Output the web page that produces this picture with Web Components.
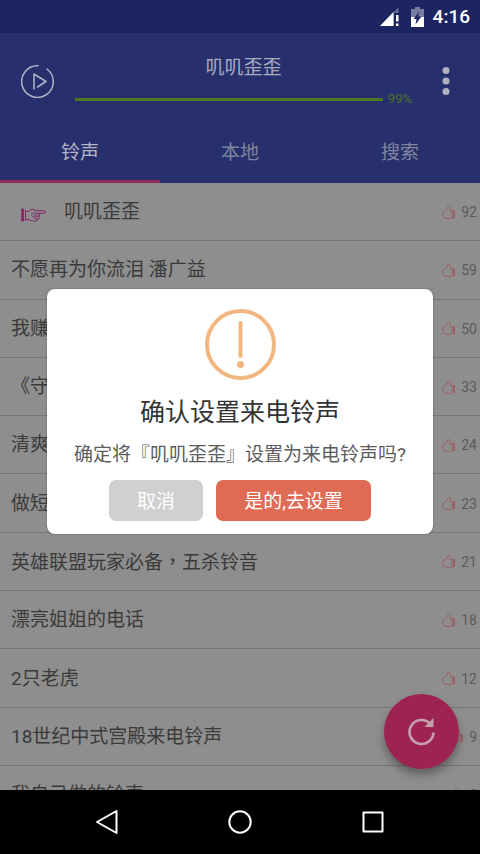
<!DOCTYPE html>
<html lang="zh-CN">
<head>
<meta charset="utf-8">
<meta name="viewport" content="width=device-width, initial-scale=1">
<title>铃声</title>
<style>
html, body { margin: 0; height: 100%; }
body { font-family: Roboto, "Noto Sans CJK SC", sans-serif; font-size: 19px; background: #000; overflow: hidden; }
</style>
</head>
<body>
<ring-app></ring-app>

<template id="t-app">
<style>
:host { display: flex; flex-direction: column; height: 100vh; }
main { flex: 1; min-height: 0; position: relative; display: flex; flex-direction: column; background: #8e8e8e; }
.layer { position: absolute; inset: 0; display: grid; align-items: center; padding: 0 47px; }
song-list { flex: 1; min-height: 0; }
refresh-fab { position: absolute; right: 21px; bottom: 21px; }
.tc { font-family: "Noto Sans CJK TC", sans-serif; }
</style>
<status-bar>4:16</status-bar>
<main>
  <player-header>叽叽歪歪</player-header>
  <tab-strip>
    <tab-item selected>铃声</tab-item>
    <tab-item>本地</tab-item>
    <tab-item>搜索</tab-item>
  </tab-strip>
  <song-list>
    <song-row playing count="92">叽叽歪歪</song-row>
    <song-row count="59">不愿再为你流泪 潘广益</song-row>
    <song-row count="50">我赚</song-row>
    <song-row count="33">《守</song-row>
    <song-row count="24">清爽</song-row>
    <song-row count="23">做短</song-row>
    <song-row count="21">英雄联盟玩家必备<span class="tc" lang="zh-TW">，</span>五杀铃音</song-row>
    <song-row count="18">漂亮姐姐的电话</song-row>
    <song-row count="12">2只老虎</song-row>
    <song-row count="9">18世纪中式宫殿来电铃声</song-row>
    <song-row peek count="8">我自己做的铃声</song-row>
  </song-list>
  <refresh-fab></refresh-fab>
  <div class="layer">
    <confirm-dialog>
      <span slot="title">确认设置来电铃声</span>
      <span slot="message">确定将『叽叽歪歪』设置为来电铃声吗?</span>
      <dialog-button slot="actions">取消</dialog-button>
      <dialog-button slot="actions" primary>是的,去设置</dialog-button>
    </confirm-dialog>
  </div>
</main>
<nav-bar></nav-bar>
</template>

<template id="t-status">
<style>
:host { display: flex; align-items: center; justify-content: flex-end; height: 33px; padding-right: 10px; box-sizing: border-box; background: #1c2560; color: #fff; font-size: 19px; font-weight: 500; line-height: 24px; }
svg { display: block; }
.sig { margin-right: 11px; }
.bat { margin-right: 9px; }
</style>
<svg class="sig" width="20" height="20" viewBox="0 0 20 20"><path d="M0 19 18.500 0V6H14V19Z" fill="#606792"/><path d="M0 19 13.500 5V19Z" fill="#fff"/><path d="M16 8h2.500v6.500H16zM16 16.500h2.500V19H16z" fill="#fff"/></svg>
<svg class="bat" width="13" height="20" viewBox="0 0 13 20"><path d="M4 0h5v2h4v8H0V2h4z" fill="#777da3"/><path d="M0 10h13v10H0z" fill="#fff"/><path d="M8.500 4 2.500 12h3l-1 5.500 6-8H7z" fill="#1c2560"/></svg>
<slot></slot>
</template>

<template id="t-header">
<style>
:host { display: flex; align-items: center; padding: 22px 30px 14px 21px; background: #27306c; color: #a9acc0; }
button { border: 0; padding: 0; background: none; display: block; flex: none; }
svg { display: block; }
.mid { flex: 1; min-width: 0; display: grid; gap: 11px; margin: 0 30px 0 21px; }
.name { text-align: center; line-height: 24px; padding-top: 1px; }
.prog { display: flex; align-items: center; gap: 5px; color: #47702e; font-size: 13px; line-height: 16px; }
progress { appearance: none; flex: 1; min-width: 0; height: 3px; border: 0; background: #3c5444; }
progress::-webkit-progress-bar { background: #3c5444; }
progress::-webkit-progress-value { background: #4c7a20; }
</style>
<button aria-label="播放"><svg width="33" height="33" viewBox="0 0 33 33" fill="none" stroke="#b3b5c6" stroke-width="1.500" stroke-linecap="round" stroke-linejoin="round"><path d="M17 .8A15.800 15.800 0 1 0 26 4"/><path d="M13 24V9l12 7.500-8.500 5.500"/></svg></button>
<div class="mid">
  <div class="name"><slot></slot></div>
  <label class="prog"><progress max="99" value="99"></progress>99%</label>
</div>
<button aria-label="更多"><svg width="8" height="30" viewBox="0 0 8 30" fill="#b0b2c0"><circle cx="4" cy="4.500" r="3.500"/><circle cx="4" cy="15" r="3.500"/><circle cx="4" cy="25.500" r="3.500"/></svg></button>
</template>

<template id="t-tabs">
<style>:host { display: grid; grid-template-columns: repeat(3, 1fr); background: #27306c; }</style>
<slot></slot>
</template>

<template id="t-tab">
<style>
:host { display: block; color: #80849f; }
:host([selected]) { color: #b4b6c5; }
button { display: block; width: 100%; border: 0; border-bottom: 3px solid transparent; padding: 20px 0 15px; background: none; font: inherit; line-height: 24px; color: inherit; }
:host([selected]) button { border-bottom-color: #932a5b; }
</style>
<button><slot></slot></button>
</template>

<template id="t-list">
<style>:host { display: flex; flex-direction: column; overflow: hidden; }</style>
<slot></slot>
</template>

<template id="t-row">
<style>
:host { flex: 1 0 58px; display: flex; flex-direction: column; color: #3a3a3a; }
:host([peek]) { flex: 0 0 24px; min-height: 0; }
.row { flex: 1 0 58px; box-sizing: border-box; display: flex; align-items: center; border-bottom: 1px solid #757575; padding: 1px 3px 0 11px; }
.hand { display: none; margin: 6px 18px 0 10px; }
:host([playing]) .hand { display: block; }
.name { flex: 1; min-width: 0; white-space: nowrap; line-height: 28px; }
button { display: flex; align-items: center; gap: 6px; border: 0; padding: 0; background: none; font: inherit; font-size: 14px; line-height: 16px; color: #5a5a5a; }
</style>
<div class="row">
<svg class="hand" width="25" height="14" viewBox="0 0 25 14" fill="none" stroke="#86266a" stroke-width="1" stroke-linejoin="round" stroke-linecap="round"><path d="M.5 1h2v12h-2z" fill="#86266a"/><path d="M4.500 2v10.500M4.500 3.500H7l4-2.300c1.500-.3 2.500 1 4 1.500h8c1.800 0 1.800 2.600 0 2.600h-6"/><path d="M11 5.500c2 0 3-1.500 4.500-.5 1.500 1.500-.5 2.500-2 2.200M16.500 5.300c3 0 3 3 .5 3h-3M17.500 8.300c2 .3 1.500 2.500-.5 2.500h-3M16.500 10.800c1 1.500-.7 2.200-2 2.200-3 0-5.500-.7-7.500-1.500H4.500M10.500 7c0 2 2 1.500 3 2.300"/></svg>
<span class="name"><slot></slot></span>
<button aria-label="赞"><svg width="13" height="13" viewBox="0 0 13 13" fill="none" stroke="#9c6064" stroke-width="1" stroke-linejoin="round"><path d="M10 4.500H8V1.500Q7.800.5 6.500.5 5.200.6 5.300 2 5.200 3.500 3.500 4.700H2.300Q.8 5 1.200 6.300.2 7 .8 8.300.4 9.300 1.200 10.200q.1 1.300 1.300 1.500Q4 12.500 6 12.500h2.500L10 11.500z"/><path d="M10.500 4.500h2v7.500h-2M11.500 5v6.500"/></svg><span class="n"></span></button>
</div>
</template>

<template id="t-fab">
<style>
:host { display: block; }
button { display: grid; place-items: center; width: 75px; height: 75px; border: 0; border-radius: 50%; padding: 0; background: #9d2450; box-shadow: 0 6px 9px rgba(0,0,0,.32); }
</style>
<button aria-label="刷新"><svg width="28" height="28" viewBox="0 0 28 28"><path d="M25.500 14.500A12 12 0 1 1 22 5.500" fill="none" stroke="#c6a0af" stroke-width="2.600"/><path d="M25.500 0V9H16.500z" fill="#c6a0af"/></svg></button>
</template>

<template id="t-dialog">
<style>
:host { display: block; }
section { display: flex; flex-direction: column; align-items: center; padding: 20px 10px 13px; border-radius: 8px; background: #fff; box-shadow: 0 0 2px rgba(0,0,0,.4); }
svg { display: block; }
h2 { margin: 17px 0 13px; font-size: 25px; line-height: 32px; font-weight: 400; color: #333; }
p { margin: 0 0 12px; line-height: 26px; color: #5c5c5c; text-align: center; }
.actions { display: flex; gap: 13px; }
</style>
<section role="dialog" aria-modal="true">
<svg width="71" height="71" viewBox="0 0 71 71"><circle cx="35.500" cy="35.500" r="33.500" fill="none" stroke="#f2b680" stroke-width="4"/><rect x="33.500" y="12" width="4" height="37" rx="2" fill="#f2b680"/><circle cx="35.500" cy="55.500" r="3.500" fill="#f2b680"/></svg>
<h2><slot name="title"></slot></h2>
<p><slot name="message"></slot></p>
<div class="actions"><slot name="actions"></slot></div>
</section>
</template>

<template id="t-dbutton">
<style>
:host { display: block; }
button { display: block; height: 41px; border: 0; border-radius: 7px; padding: 2px 28px 0; background: #d0d0d0; color: #fff; font: inherit; line-height: 28px; }
:host([primary]) button { background: #df6b54; }
</style>
<button><slot></slot></button>
</template>

<template id="t-nav">
<style>
:host { display: grid; grid-template-columns: repeat(3, 1fr); align-items: center; height: 64px; padding: 0 40px; background: #000; }
button { justify-self: center; border: 0; padding: 0; background: none; }
svg { display: block; }
</style>
<button aria-label="返回"><svg width="24" height="26" viewBox="0 0 24 26" fill="none" stroke="#fff" stroke-width="2" stroke-linejoin="round"><path d="M21.500 2v22L2 13z"/></svg></button>
<button aria-label="主屏幕"><svg width="26" height="26" viewBox="0 0 26 26" fill="none" stroke="#fff" stroke-width="2"><circle cx="13" cy="13" r="10.700"/></svg></button>
<button aria-label="最近任务"><svg width="22" height="22" viewBox="0 0 22 22" fill="none" stroke="#fff" stroke-width="2" stroke-linejoin="round"><path d="M1.500 1.500h19v19h-19z"/></svg></button>
</template>

<script>
class Base extends HTMLElement {
  constructor() {
    super();
    this.attachShadow({ mode: 'open' })
      .append(document.getElementById(this.constructor.tpl).content.cloneNode(true));
  }
}
const define = (name, tpl, Parent = Base) =>
  customElements.define(name, class extends Parent { static tpl = tpl; });

class Row extends Base {
  connectedCallback() {
    this.shadowRoot.querySelector('.n').textContent = this.getAttribute('count');
  }
}
define('status-bar', 't-status');
define('player-header', 't-header');
define('tab-item', 't-tab');
define('tab-strip', 't-tabs');
define('song-row', 't-row', Row);
define('song-list', 't-list');
define('refresh-fab', 't-fab');
define('dialog-button', 't-dbutton');
define('confirm-dialog', 't-dialog');
define('nav-bar', 't-nav');
define('ring-app', 't-app');
</script>
</body>
</html>
